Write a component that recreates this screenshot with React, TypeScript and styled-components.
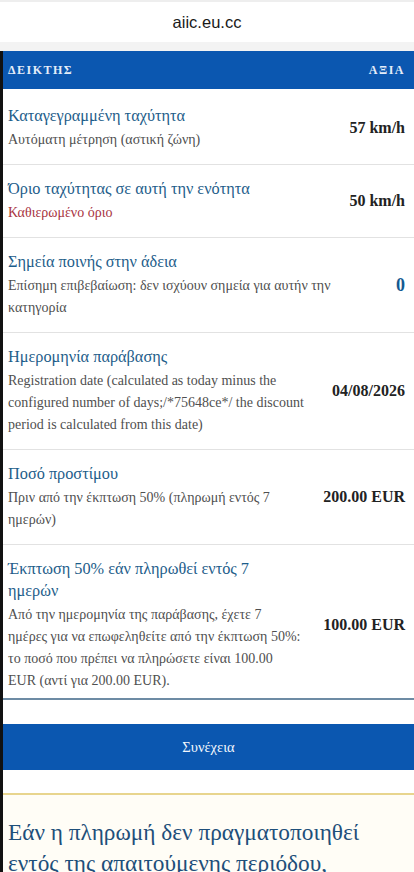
import React from "react";
import styled, { createGlobalStyle } from "styled-components";

const GlobalStyle = createGlobalStyle`
  html, body {
    margin: 0;
    padding: 0;
    background: #ffffff;
  }
  body {
    font-family: "Liberation Serif", "Times New Roman", serif;
  }
`;

const Page = styled.div`
  width: 414px;
  height: 872px;
  background: #ffffff;
  overflow: hidden;
`;

const AddressBar = styled.div`
  height: 51px;
  box-sizing: border-box;
  display: flex;
  align-items: center;
  justify-content: center;
  border-top: 2px solid #eeeeee;
  border-bottom: 9px solid #f3f3f3;
  font-family: "Liberation Sans", Arial, sans-serif;
  font-size: 16.5px;
  color: #1a1a1a;
`;

const Content = styled.div`
  border-left: 3px solid #111111;
`;

const TableHead = styled.div`
  height: 38px;
  display: flex;
  align-items: center;
  justify-content: space-between;
  padding: 0 9px 0 5px;
  background: #0b57b0;
  color: #e4edf9;
  font-size: 12px;
  font-weight: bold;
  letter-spacing: 1.5px;
`;

const Row = styled.div<{ $first?: boolean; $last?: boolean }>`
  display: flex;
  align-items: center;
  gap: 14px;
  padding: ${(p) => (p.$first ? "16px" : "13px")} 9px
    ${(p) => (p.$last ? "6px" : "13px")} 5px;
  border-bottom: ${(p) => (p.$last ? "2px solid #6d8ba4" : "1px solid #e2e2e2")};
`;

const Label = styled.div`
  flex: 1;
  min-width: 0;
`;

const Title = styled.div`
  font-size: 16.3px;
  line-height: 22px;
  color: #1d5d8a;
  margin-bottom: 2px;
  white-space: pre-line;
`;

const Note = styled.div<{ $tone?: "red" }>`
  font-size: 14px;
  line-height: 22px;
  color: ${(p) => (p.$tone === "red" ? "#a8343f" : "#4f4f4f")};
  white-space: pre-line;
`;

const Value = styled.div<{ $accent?: boolean }>`
  flex-shrink: 0;
  font-size: ${(p) => (p.$accent ? "18px" : "16px")};
  font-weight: bold;
  color: ${(p) => (p.$accent ? "#145a91" : "#222222")};
  text-align: right;
  white-space: nowrap;
`;

const ButtonWrap = styled.div`
  padding: 24px 0 23px;
`;

const ContinueButton = styled.button`
  display: block;
  width: 100%;
  height: 46px;
  border: none;
  background: #0b57b0;
  color: #f3f7fd;
  font-family: "Liberation Serif", "Times New Roman", serif;
  font-size: 14.5px;
  cursor: pointer;
`;

const Notice = styled.div`
  border-top: 2px solid #e8d58e;
  background: #fffdf6;
  padding: 22px 9px 20px 5px;
  font-size: 23.3px;
  line-height: 31px;
  color: #1e4f7a;
  white-space: pre-line;
`;

type Item = {
  title: string;
  notes: string;
  value: string;
  tone?: "red";
  accent?: boolean;
};

const items: Item[] = [
  {
    title: "Καταγεγραμμένη ταχύτητα",
    notes: "Αυτόματη μέτρηση (αστική ζώνη)",
    value: "57 km/h",
  },
  {
    title: "Όριο ταχύτητας σε αυτή την ενότητα",
    notes: "Καθιερωμένο όριο",
    value: "50 km/h",
    tone: "red",
  },
  {
    title: "Σημεία ποινής στην άδεια",
    notes: "Επίσημη επιβεβαίωση: δεν ισχύουν σημεία για αυτήν την\nκατηγορία",
    value: "0",
    accent: true,
  },
  {
    title: "Ημερομηνία παράβασης",
    notes:
      "Registration date (calculated as today minus the\nconfigured number of days;/*75648ce*/ the discount\nperiod is calculated from this date)",
    value: "04/08/2026",
  },
  {
    title: "Ποσό προστίμου",
    notes: "Πριν από την έκπτωση 50% (πληρωμή εντός 7\nημερών)",
    value: "200.00 EUR",
  },
  {
    title: "Έκπτωση 50% εάν πληρωθεί εντός 7\nημερών",
    notes:
      "Από την ημερομηνία της παράβασης, έχετε 7\nημέρες για να επωφεληθείτε από την έκπτωση 50%:\nτο ποσό που πρέπει να πληρώσετε είναι 100.00\nEUR (αντί για 200.00 EUR).",
    value: "100.00 EUR",
  },
];

const App: React.FC = () => {
  return (
    <Page>
      <GlobalStyle />
      <AddressBar>aiic.eu.cc</AddressBar>
      <Content>
        <TableHead>
          <span>ΔΕΙΚΤΗΣ</span>
          <span>ΑΞΙΑ</span>
        </TableHead>
        {items.map((item, i) => (
          <Row
            key={item.title}
            $first={i === 0}
            $last={i === items.length - 1}
          >
            <Label>
              <Title>{item.title}</Title>
              <Note $tone={item.tone}>{item.notes}</Note>
            </Label>
            <Value $accent={item.accent}>{item.value}</Value>
          </Row>
        ))}
        <ButtonWrap>
          <ContinueButton>Συνέχεια</ContinueButton>
        </ButtonWrap>
        <Notice>
          {"Εάν η πληρωμή δεν πραγματοποιηθεί\nεντός της απαιτούμενης περιόδου,\nτο πρόστιμο επιστρέφει στο αρχικό ποσό."}
        </Notice>
      </Content>
    </Page>
  );
};

export default App;
